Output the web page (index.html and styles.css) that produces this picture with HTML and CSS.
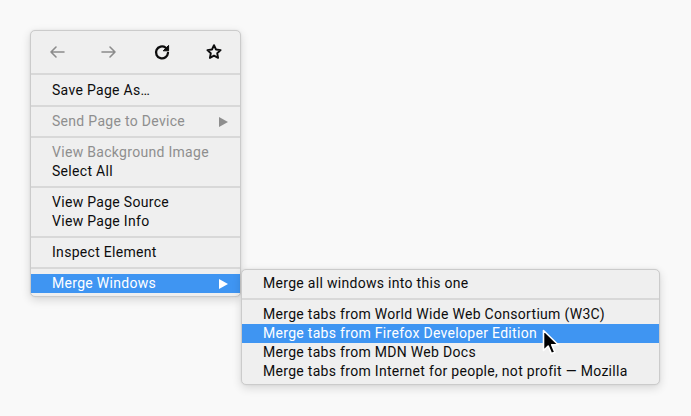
FILE: index.html
```html
<!DOCTYPE html>
<html>
<head>
<meta charset="utf-8">
<link rel="stylesheet" href="styles.css">
</head>
<body>
<div class="stage">
  <div class="menu main-menu">
    <div class="nav">
      <div class="nav-btn disabled">
        <svg width="18" height="18" viewBox="0 0 18 18"><path d="M16 9H3M8 4L3 9l5 5" fill="none" stroke="#8c8c8c" stroke-width="1.6" stroke-linecap="round" stroke-linejoin="round"/></svg>
      </div>
      <div class="nav-btn disabled">
        <svg width="18" height="18" viewBox="0 0 18 18"><path d="M2 9h13M10 4l5 5-5 5" fill="none" stroke="#8c8c8c" stroke-width="1.6" stroke-linecap="round" stroke-linejoin="round"/></svg>
      </div>
      <div class="nav-btn">
        <svg width="18" height="18" viewBox="0 0 18 18"><path d="M15 9.8A6 6 0 1 1 12.6 4.6" fill="none" stroke="#0c0c0d" stroke-width="2.3" stroke-linecap="round"/><path d="M15.6 2.4v5.4h-5.4z" fill="#0c0c0d" stroke="#0c0c0d" stroke-width="1" stroke-linejoin="round"/></svg>
      </div>
      <div class="nav-btn">
        <svg width="18" height="18" viewBox="0 0 18 18"><path d="M9 2.2l2 4.3 4.6.6-3.4 3.2.9 4.6L9 12.6l-4.1 2.3.9-4.6L2.4 7.1l4.6-.6z" fill="none" stroke="#0c0c0d" stroke-width="1.9" stroke-linejoin="round"/></svg>
      </div>
    </div>
    <div class="sep"></div>
    <div class="item">Save Page As…</div>
    <div class="sep"></div>
    <div class="item disabled">Send Page to Device<span class="arrow gray"></span></div>
    <div class="sep"></div>
    <div class="item disabled">View Background Image</div>
    <div class="item">Select All</div>
    <div class="sep"></div>
    <div class="item">View Page Source</div>
    <div class="item">View Page Info</div>
    <div class="sep"></div>
    <div class="item">Inspect Element</div>
    <div class="sep"></div>
    <div class="item active">Merge Windows<span class="arrow white"></span></div>
  </div>

  <div class="menu sub-menu">
    <div class="item">Merge all windows into this one</div>
    <div class="sep"></div>
    <div class="item">Merge tabs from World Wide Web Consortium (W3C)</div>
    <div class="item active">Merge tabs from Firefox Developer Edition</div>
    <div class="item">Merge tabs from MDN Web Docs</div>
    <div class="item">Merge tabs from Internet for people, not profit — Mozilla</div>
  </div>

  <svg class="cursor" width="20" height="28" viewBox="0 0 20 28">
    <path d="M1.5 1.5V21.5L6.2 17L9.4 24.6L12.8 23.2L9.7 15.8H16.2Z" fill="#000" stroke="#fff" stroke-width="1.6" stroke-linejoin="round"/>
  </svg>
</div>
</body>
</html>
```
FILE: styles.css
```css
* { box-sizing: border-box; }
html, body {
  margin: 0;
  padding: 0;
  background: #f9f9f9;
  width: 691px;
  height: 416px;
  overflow: hidden;
}
body {
  font-family: Roboto, "Liberation Sans", sans-serif;
  font-size: 14px;
  letter-spacing: 0.3px;
  color: #0c0c0d;
}
.stage {
  position: relative;
  width: 691px;
  height: 416px;
}
.menu {
  position: absolute;
  background: #efefef;
  border: 1px solid #cbcbcb;
  border-radius: 5px;
  box-shadow: 0 3px 10px rgba(0,0,0,0.14), 0 0 2px rgba(0,0,0,0.08);
  display: flex;
  flex-direction: column;
}
.main-menu {
  left: 30px;
  top: 30px;
  width: 211px;
  padding: 0 0 3px;
}
.sub-menu {
  left: 241px;
  top: 269px;
  width: 419px;
  padding: 4px 0 3px;
}
.nav {
  height: 42px;
  display: grid;
  grid-template-columns: repeat(4, 1fr);
  align-items: center;
}
.nav-btn {
  display: flex;
  justify-content: center;
  align-items: center;
}
.sep {
  height: 2px;
  background: #d8d8d8;
  margin: 5px 0;
}
.nav + .sep { margin-top: 0; margin-bottom: 6px; }
.item {
  height: 19px;
  line-height: 19px;
  padding: 0 12px 0 21px;
  display: flex;
  justify-content: space-between;
  align-items: center;
  white-space: nowrap;
}
.item.disabled { color: #8e8e8e; }
.item.active {
  background: #3f95f2;
  color: #fff;
}
.arrow {
  width: 0;
  height: 0;
  border-top: 5px solid transparent;
  border-bottom: 5px solid transparent;
  border-left: 9px solid #fff;
}
.arrow.gray { border-left-color: #8e8e8e; }
.cursor {
  position: absolute;
  left: 542px;
  top: 329px;
}
```
